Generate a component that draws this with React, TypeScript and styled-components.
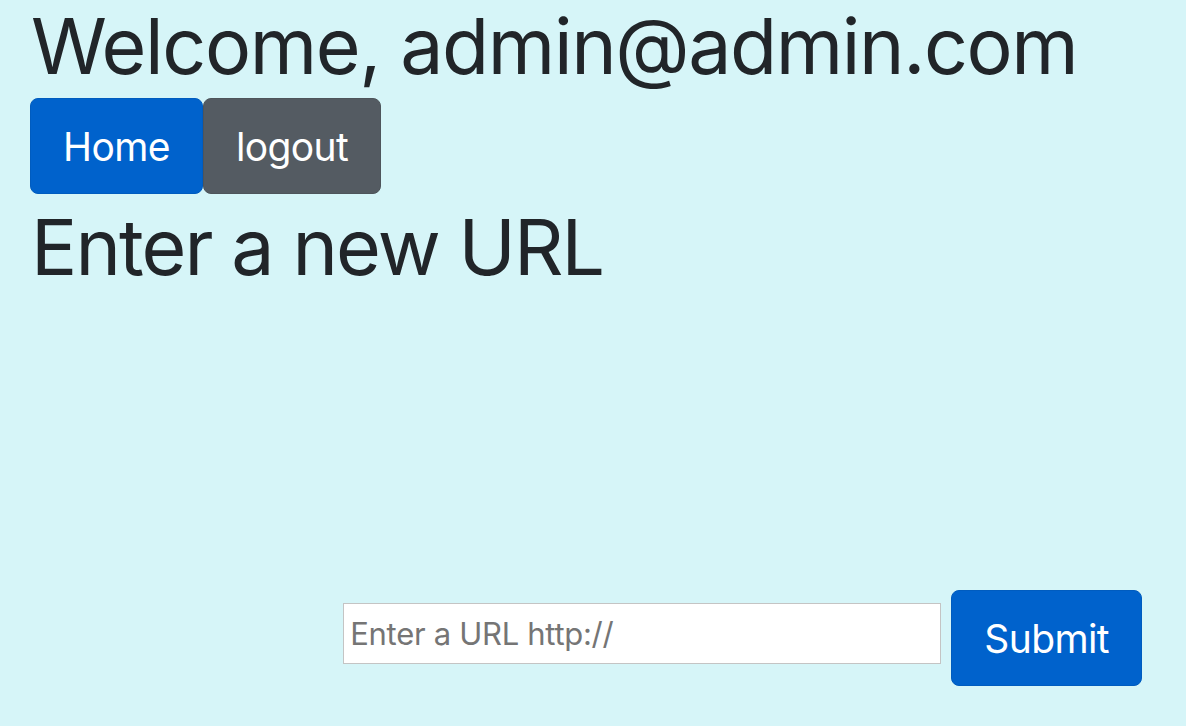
import styled, { createGlobalStyle } from "styled-components";

const GlobalStyle = createGlobalStyle`
  html, body {
    margin: 0;
    padding: 0;
    background: #d6f5f8;
  }
  body {
    font-family: Inter, "Noto Sans", sans-serif;
    color: #212529;
  }
`;

const Page = styled.div`
  display: flex;
  flex-direction: column;
  padding: 0 0 0 30px;
  min-height: 726px;
  box-sizing: border-box;
`;

const Title = styled.h1`
  margin: 0;
  padding-left: 1px;
  font-size: 77px;
  font-weight: 400;
  line-height: 93px;
  letter-spacing: -1.4px;
`;

const Subtitle = styled.h2`
  margin: 5px 0 0;
  padding-left: 1px;
  font-size: 77px;
  font-weight: 400;
  line-height: 96px;
  letter-spacing: -1.9px;
`;

const Nav = styled.div`
  display: flex;
  margin-top: 5px;
`;

const Button = styled.button<{ $variant?: "primary" | "secondary" }>`
  font-family: Inter, "Noto Sans", sans-serif;
  background: ${(p) => (p.$variant === "secondary" ? "#545b62" : "#0062cc")};
  border: 1px solid ${(p) => (p.$variant === "secondary" ? "#4e555b" : "#005cbf")};
  color: #fff;
  border-radius: 8px;
  font-size: 39px;
  letter-spacing: -0.6px;
  font-weight: 400;
  padding: 0 32px;
  height: 96px;
  cursor: pointer;
`;

const Form = styled.form`
  display: flex;
  align-items: flex-start;
  justify-content: flex-end;
  gap: 10px;
  padding-right: 44px;
  margin-top: 295px;
`;

const UrlInput = styled.input`
  width: 598px;
  height: 61px;
  margin-top: 13px;
  box-sizing: border-box;
  border: 1px solid #c4c4c4;
  background: #fff;
  font-family: Inter, "Noto Sans", sans-serif;
  font-size: 31px;
  letter-spacing: -0.3px;
  padding: 0 6px;
  &::placeholder {
    color: #757575;
  }
  &:focus {
    outline: none;
  }
`;

export default function App() {
  return (
    <>
      <GlobalStyle />
      <Page>
        <Title>Welcome, admin@admin.com</Title>
        <Nav>
          <Button>Home</Button>
          <Button $variant="secondary">logout</Button>
        </Nav>
        <Subtitle>Enter a new URL</Subtitle>
        <Form onSubmit={(e) => e.preventDefault()}>
          <UrlInput type="text" placeholder="Enter a URL http://" />
          <Button type="submit">Submit</Button>
        </Form>
      </Page>
    </>
  );
}
